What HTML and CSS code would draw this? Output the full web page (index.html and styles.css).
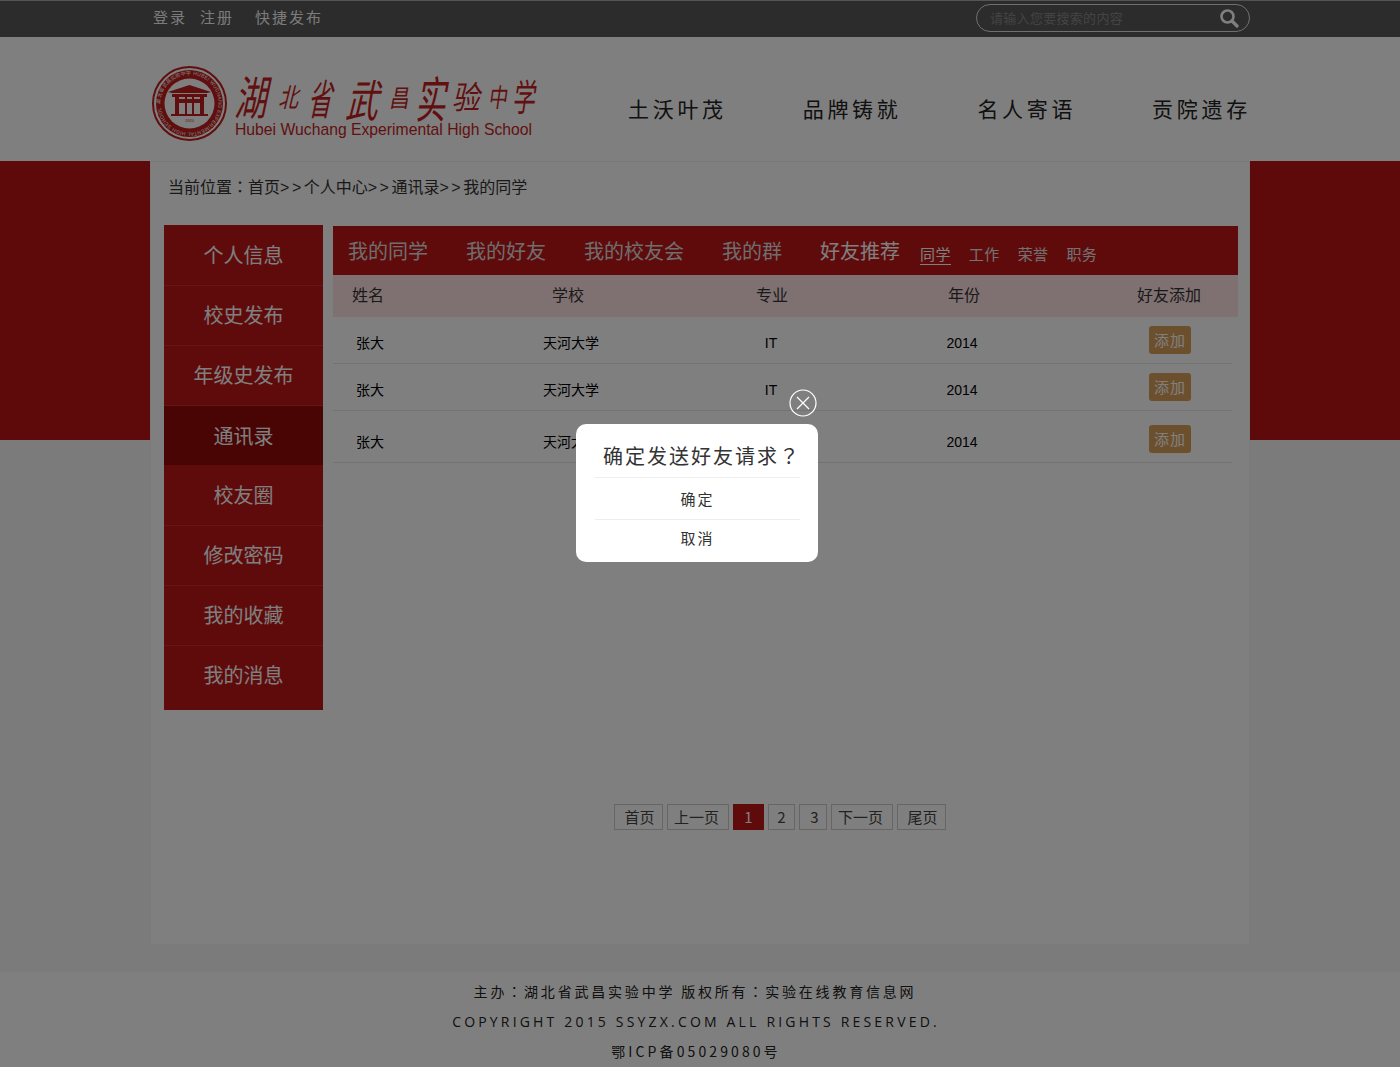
FILE: index.html
```html
<!DOCTYPE html>
<html lang="zh-CN">
<head>
<meta charset="utf-8">
<title>我的同学</title>
<link rel="stylesheet" href="styles.css">
</head>
<body>
<div class="topbar">
  <div class="wrap topbar-in">
    <div class="top-links">
      <a class="t-login">登录</a><a class="t-reg">注册</a><a class="t-post">快捷发布</a>
    </div>
    <div class="search">
      <span class="placeholder">请输入您要搜索的内容</span>
      <svg class="search-icon" width="20" height="20" viewBox="0 0 20 20"><circle cx="8.5" cy="8.5" r="6" fill="none" stroke="#fff" stroke-width="2.6"/><path d="M13 13l5 5" stroke="#fff" stroke-width="3.2" stroke-linecap="round"/></svg>
    </div>
  </div>
</div>

<header class="header">
  <div class="wrap header-in">
    <svg class="logo" width="390" height="78" viewBox="0 0 390 78">
      <defs><path id="ring" d="M37.5 37.5m-29 0a29 29 0 1 1 58 0a29 29 0 1 1-58 0"/></defs>
      <circle cx="37.5" cy="37.5" r="36.5" fill="#fff" stroke="#c01c1c" stroke-width="2"/>
      <circle cx="37.5" cy="37.5" r="33.5" fill="#c01c1c"/>
      <text class="seal-text"><textPath href="#ring" textLength="178">湖北省武昌实验中学 HUBEI WUCHANG EXPERIMENTAL HIGH SCHOOL</textPath></text>
      <circle cx="37.5" cy="37.5" r="25" fill="#fff"/>
      <path d="M16 26l21.5-7 21.5 7-4 1H20z" fill="#c01c1c"/>
      <path d="M20 28h35v3H20zM23 31h4v17h-4zM48 31h4v17h-4zM33 31h2v17h-2zM40 31h2v17h-2zM27 33h21v4H27z" fill="#c01c1c"/>
      <path d="M19 48h37v2H19z" fill="#c01c1c"/>
      <text class="seal-year" x="37.5" y="56" text-anchor="middle">1920</text>
      <g class="callig">
        <text class="c36" transform="translate(82 49) skewX(-12) scale(.9 1.3)">湖</text>
        <text class="c22" transform="translate(126 41) skewX(-14) scale(.9 1.2)">北</text>
        <text class="c28" transform="translate(155 49) skewX(-12) scale(.85 1.5)">省</text>
        <text class="c34" transform="translate(193 51) skewX(-14) scale(.95 1.3)">武</text>
        <text class="c22" transform="translate(237 41) skewX(-10) scale(.9 1.1)">昌</text>
        <text class="c32" transform="translate(263 52) skewX(-10) scale(.95 1.55)">实</text>
        <text class="c28" transform="translate(300 43) skewX(-10) scale(1 1.15)">验</text>
        <text class="c20" transform="translate(336 41) skewX(-8) scale(.95 1.3)">中</text>
        <text class="c24" transform="translate(360 45) skewX(-8) scale(.95 1.55)">学</text>
      </g>
      <text class="logo-en" x="83" y="69" textLength="297" lengthAdjust="spacingAndGlyphs">Hubei Wuchang Experimental High School</text>
    </svg>
    <nav class="nav">
      <a>土沃叶茂</a><a>品牌铸就</a><a>名人寄语</a><a>贡院遗存</a>
    </nav>
  </div>
</header>

<div class="band">
  <main class="main">
    <div class="crumb">当前位置<span class="punct" lang="zh-TW">：</span>首页<span class="sep">&gt;&gt;</span>个人中心<span class="sep">&gt;&gt;</span>通讯录<span class="sep">&gt;&gt;</span>我的同学</div>
    <div class="cols">
      <ul class="side">
        <li>个人信息</li>
        <li>校史发布</li>
        <li>年级史发布</li>
        <li class="on">通讯录</li>
        <li>校友圈</li>
        <li>修改密码</li>
        <li>我的收藏</li>
        <li>我的消息</li>
      </ul>
      <section class="content">
        <div class="tabs">
          <a>我的同学</a><a>我的好友</a><a>我的校友会</a><a>我的群</a><a class="cur">好友推荐</a>
          <div class="subtabs"><a class="cur">同学</a><a>工作</a><a>荣誉</a><a>职务</a></div>
        </div>
        <div class="thead"><span>姓名</span><span>学校</span><span>专业</span><span>年份</span><span>好友添加</span></div>
        <div class="row r1"><span>张大</span><span>天河大学</span><span>IT</span><span>2014</span><span><button class="add">添加</button></span></div>
        <div class="row r1"><span>张大</span><span>天河大学</span><span>IT</span><span>2014</span><span><button class="add">添加</button></span></div>
        <div class="row r3"><span>张大</span><span>天河大学</span><span>IT</span><span>2014</span><span><button class="add">添加</button></span></div>
        <div class="pager">
          <a class="w49">首页</a><a class="w62">上一页</a><a class="active">1</a><a class="w27">2</a><a class="w28">3</a><a class="w62">下一页</a><a class="w49">尾页</a>
        </div>
      </section>
    </div>
  </main>
</div>

<footer class="footer">
  <p class="f1">主办<span class="punct" lang="zh-TW">：</span>湖北省武昌实验中学 版权所有<span class="punct" lang="zh-TW">：</span>实验在线教育信息网</p>
  <p class="f2">COPYRIGHT 2015 SSYZX.COM ALL RIGHTS RESERVED.</p>
  <p class="f3">鄂ICP备05029080号</p>
</footer>

<div class="overlay"></div>
<button class="close" aria-label="关闭">
  <svg width="28" height="28" viewBox="0 0 28 28"><circle cx="14" cy="14" r="13" fill="none" stroke="#fff" stroke-width="1.2"/><path d="M8 8l12 12M20 8L8 20" stroke="#fff" stroke-width="1.2"/></svg>
</button>
<div class="modal">
  <div class="m-title">确定发送好友请求<span class="punct" lang="zh-TW">？</span></div>
  <div class="m-btn">确定</div>
  <div class="m-btn m-last">取消</div>
</div>
</body>
</html>
```
FILE: styles.css
```css
* { box-sizing: border-box; }
html, body { margin: 0; padding: 0; }
body {
  height: 1067px;
  overflow: hidden;
  background: #f6f6f6;
  color: #333;
  font-family: "Noto Sans CJK SC", "Liberation Sans", sans-serif;
  font-size: 14px;
}
ul { list-style: none; margin: 0; padding: 0; }
p { margin: 0; }
.wrap { width: 1100px; margin: 0 auto; }
.punct { font-family: "Noto Sans CJK TC", sans-serif; }

.topbar { height: 37px; background: #585858; border-top: 1px solid #a8a8a8; }
.topbar-in { display: flex; justify-content: space-between; align-items: center; height: 32px; }
.top-links { display: flex; padding-left: 3px; color: #fff; font-size: 15px; letter-spacing: 2px; line-height: 20px; opacity: .95; }
.t-login { width: 47px; }
.t-reg { width: 55px; }
.search {
  width: 274px; height: 28px; margin-top: 1px;
  border: 1px solid #e0e0e0; border-radius: 14px;
  display: flex; align-items: center; justify-content: space-between;
  padding: 0 10px 0 13px;
}
.placeholder { font-size: 13px; color: #888; letter-spacing: .3px; line-height: 18px; }
.search-icon { display: block; }

.header { height: 124px; background: #fff; }
.header-in { display: flex; align-items: center; height: 124px; }
.logo { flex: none; margin: 12px 0 0 2px; overflow: visible; }
.seal-text { font: 5px "Liberation Sans", sans-serif; fill: #fff; }
.seal-year { font: 4px "Liberation Sans", sans-serif; fill: #c01c1c; }
.callig text { fill: #c41e1e; font-family: "Noto Sans CJK SC", sans-serif; }
.c20 { font-size: 20px; }
.c22 { font-size: 22px; }
.c24 { font-size: 24px; }
.c28 { font-size: 28px; }
.c32 { font-size: 32px; }
.c34 { font-size: 34px; }
.c36 { font-size: 36px; }
.logo-en { font: 17px "Liberation Sans", sans-serif; fill: #c41e1e; }
.nav { display: flex; margin-left: 86px; margin-top: 18px; gap: 78.7px; color: #222; font-size: 21px; letter-spacing: 3.7px; line-height: 30px; white-space: nowrap; }
.nav a { width: 96px; }

.band {
  background: linear-gradient(#bd1515, #bd1515) no-repeat 0 0 / 100% 279px;
  padding-bottom: 27px;
}
.main { width: 1100px; height: 784px; margin: 0 auto; background: #fff; border: 1px solid #f4f4f4; border-top-color: #eee; }
.crumb { height: 63px; line-height: 48px; padding-left: 17px; font-size: 16px; color: #333; }
.sep { letter-spacing: 2.5px; font-family: "Liberation Sans", sans-serif; }
.cols { display: flex; gap: 10px; padding-left: 13px; }

.side { width: 159px; height: 485px; background: #c01616; margin: 0; }
.side li {
  height: 60px; line-height: 58px; text-align: center;
  color: #fff; font-size: 20px;
  border-bottom: 1px solid #cc2c2c;
}
.side li:first-child { height: 61px; line-height: 60px; }
.side li:last-child { border-bottom: 0; }
.side li.on { background: #920808; border-bottom-color: #c01616; line-height: 60px; }

.content { width: 905px; margin-top: 1px; }
.tabs { height: 49px; background: #c01616; display: flex; align-items: center; padding: 1px 0 0 15px; color: #ddd; font-size: 20px; line-height: 30px; }
.tabs > a { margin-right: 38px; }
.tabs > a.cur { color: #fff; margin-right: 20px; }
.subtabs { display: flex; gap: 18px; font-size: 15px; letter-spacing: .4px; margin-top: 7px; color: #e4e4e4; }
.subtabs a { line-height: 20px; height: 21px; }
.subtabs a.cur { border-bottom: 1px solid #fff; color: #fff; }

.thead, .row { display: grid; text-align: center; }
.thead { height: 42px; padding-bottom: 4px; align-items: center; background: #ffe2e2; font-size: 16px; color: #333; grid-template-columns: 70px 330px 78px 306px 104px; }
.row { width: 899px; border-bottom: 1px solid #e6e6e6; font-size: 14px; color: #000; grid-template-columns: 74px 328px 72px 310px 106px; align-items: start; }
.r1 { height: 47px; }
.r3 { height: 52px; }
.row span { line-height: 20px; margin-top: 16px; font-family: "Liberation Sans", "Noto Sans CJK SC", sans-serif; }
.r3 span { margin-top: 21px; }
.row span:last-child { margin-top: 9px; line-height: 0; }
.r3 span:last-child { margin-top: 14px; }
.add {
  width: 42px; height: 28px; padding: 0; border: 0; border-radius: 3px;
  background: #d9a05a; color: #fff; font: 15px/26px "Noto Sans CJK SC", sans-serif; letter-spacing: 1px;
}

.pager { display: flex; justify-content: center; gap: 4px; margin-top: 341px; padding-right: 11px; }
.pager a {
  height: 26px; line-height: 23px; text-align: center;
  border: 1px solid #ccc; color: #444; font-size: 15px;
}
.w49 { width: 49px; padding-left: 2px; }
.w62 { width: 62px; padding-right: 3px; }
.w27 { width: 27px; }
.w28 { width: 28px; padding-left: 3px; }
.pager a.active { width: 31px; background: #c01616; border-color: #c01616; color: #fff; }

.footer { height: 95px; background: #fff; padding-top: 4px; text-align: center; color: #222; font-size: 14px; line-height: 30px; white-space: nowrap; }
.f1 { letter-spacing: 2.8px; padding-right: 10px; }
.f2 { letter-spacing: 3.18px; font-family: "Open Sans", "Liberation Sans", sans-serif; padding: 1px 8px 0 0; line-height: 29px; }
.f3 { letter-spacing: 3.1px; padding-right: 8px; }

.overlay { position: fixed; inset: 0; background: rgba(0, 0, 0, .5); }
.close { position: fixed; left: 789px; top: 389px; width: 28px; height: 28px; padding: 0; border: 0; background: none; }
.close svg { display: block; }
.modal {
  position: fixed; left: 576px; top: 424px; width: 242px; height: 138px;
  background: #fff; border-radius: 10px; padding: 0 18px 0 19px; color: #333; text-align: center;
}
.m-title { height: 54px; line-height: 63px; font-size: 20px; letter-spacing: 2px; padding-left: 8px; white-space: nowrap; border-bottom: 1px solid #eee; color: #333; }
.m-btn { height: 42px; line-height: 42px; font-size: 15px; letter-spacing: 2px; border-bottom: 1px solid #eee; }
.m-last { border-bottom: 0; line-height: 36px; }
```
